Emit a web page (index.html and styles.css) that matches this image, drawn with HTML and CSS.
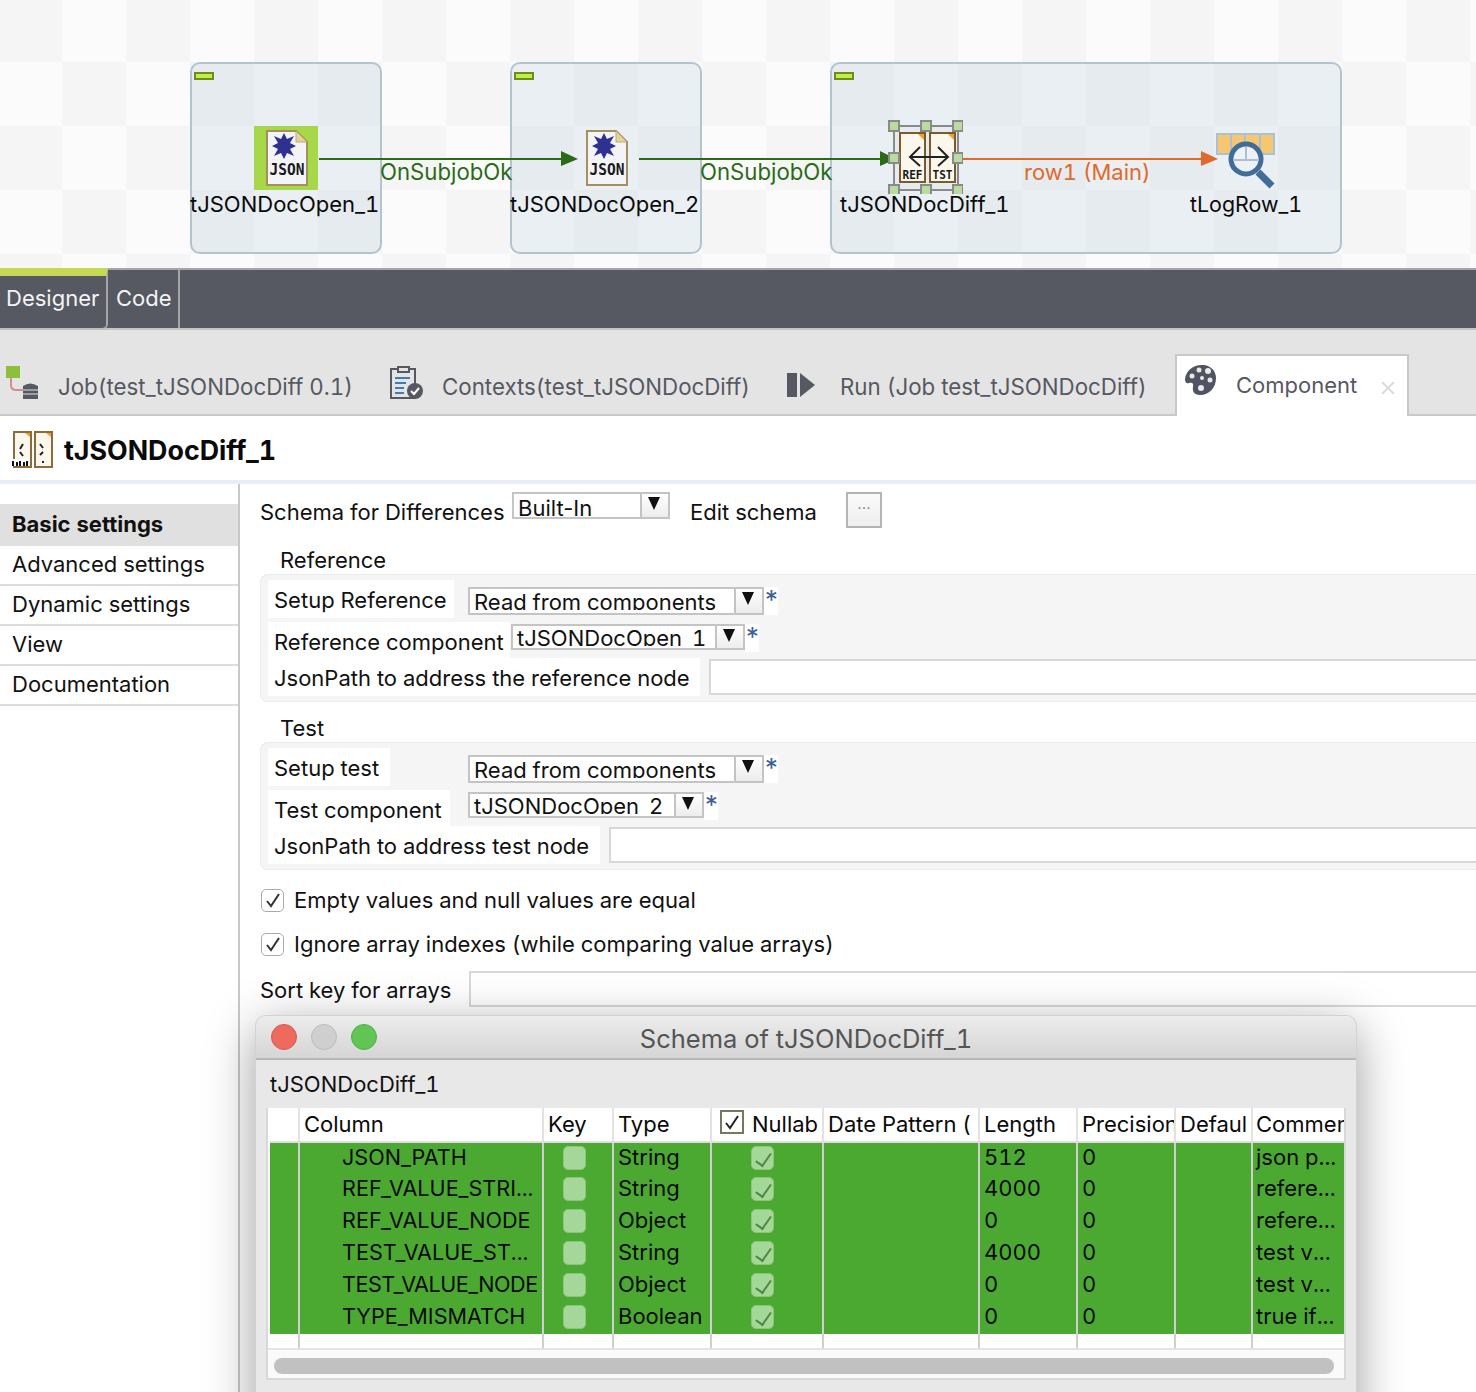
FILE: index.html
```html
<!DOCTYPE html>
<html lang="en">
<head>
    <meta charset="UTF-8">
    <title>Talend tJSONDocDiff</title>
    <link rel="stylesheet" href="styles.css">
</head>
<body>
    <svg class="defs" width="0" height="0">
        <symbol id="jsonDoc" viewBox="0 0 42 56">
            <path d="M1 1H30L41 12V55H1Z" fill="#f3f4f8" stroke="#a58f5c" stroke-width="2"/>
            <path d="M30 1L41 12H30Z" fill="#e3d3a0" stroke="#c2a868"/>
            <path d="M18 3L21 9L28 6L24 13L30 16L24 19L28 26L21 23L18 29L15 23L8 26L12 19L6 16L12 13L8 6L15 9Z" fill="#2e3192"/>
            <text x="21" y="45" class="json-word" text-anchor="middle" textLength="35" lengthAdjust="spacingAndGlyphs">JSON</text>
        </symbol>
    </svg>

    <div class="page">
        <section class="canvas">
            <div class="subjob subjob-a"><span class="collapse"></span></div>
            <div class="subjob subjob-b"><span class="collapse"></span></div>
            <div class="subjob subjob-c"><span class="collapse"></span></div>

            <svg class="links" width="1476" height="268">
                <path d="M319 159H563" stroke="#2b6a17" stroke-width="2"/>
                <path d="M561 151L578 159L561 166Z" fill="#2b6a17"/>
                <path d="M639 159H880" stroke="#2b6a17" stroke-width="2"/>
                <path d="M880 151L896 159L880 166Z" fill="#2b6a17"/>
                <path d="M962 159H1203" stroke="#e0692b" stroke-width="2"/>
                <path d="M1201 151L1218 159L1201 166Z" fill="#e0692b"/>
            </svg>

            <div class="node-hilite"></div>
            <svg class="node-icon icon-open1" width="42" height="56"><use href="#jsonDoc"/></svg>
            <svg class="node-icon icon-open2" width="42" height="56"><use href="#jsonDoc"/></svg>

            <svg class="node-icon icon-diff" width="84" height="84" viewBox="0 0 84 84">
                <rect x="15" y="16" width="64" height="64" fill="none" stroke="#8a8a8a" stroke-width="2"/>
                <rect x="21" y="23" width="25" height="49" fill="#fbf7ec" stroke="#7a5c2a" stroke-width="2"/>
                <rect x="51" y="23" width="25" height="49" fill="#fbf7ec" stroke="#7a5c2a" stroke-width="2"/>
                <path d="M39 24L45 24V30Z M69 24L75 24V30Z" fill="#f0a030"/>
                <path d="M41 37L31 47L41 56 M59 37L69 47L59 56 M31 47H69" fill="none" stroke="#222" stroke-width="2"/>
                <text x="33.5" y="69" class="pixel-word" text-anchor="middle" textLength="20" lengthAdjust="spacingAndGlyphs">REF</text>
                <text x="63.5" y="69" class="pixel-word" text-anchor="middle" textLength="20" lengthAdjust="spacingAndGlyphs">TST</text>
                <g fill="#b9dba0" stroke="#8a8a8a" stroke-width="2">
                    <rect x="10" y="11" width="10" height="10"/><rect x="42" y="11" width="10" height="10"/><rect x="74" y="11" width="10" height="10"/>
                    <rect x="10" y="43" width="10" height="10"/><rect x="74" y="43" width="10" height="10"/>
                    <rect x="10" y="75" width="10" height="10"/><rect x="42" y="75" width="10" height="10"/><rect x="74" y="75" width="10" height="10"/>
                </g>
            </svg>

            <svg class="node-icon icon-log" width="60" height="56" viewBox="0 0 60 56">
                <rect x="1" y="1" width="57" height="20" fill="#f6c770" stroke="#a9c0d6" stroke-width="2"/>
                <path d="M15 1V21 M29 1V21 M44 1V21" stroke="#a9c0d6" stroke-width="2"/>
                <circle cx="30" cy="26" r="15" fill="#eef2f6" stroke="#3f6c99" stroke-width="5"/>
                <path d="M30 14V27 M17 27H43" stroke="#a9c0d6" stroke-width="2"/>
                <path d="M42 39L56 53" stroke="#3f6c99" stroke-width="7"/>
            </svg>

            <span class="link-label ok-a">OnSubjobOk</span>
            <span class="link-label ok-b">OnSubjobOk</span>
            <span class="link-label row-main">row1 (Main)</span>

            <span class="node-label lbl-open1">tJSONDocOpen_1</span>
            <span class="node-label lbl-open2">tJSONDocOpen_2</span>
            <span class="node-label lbl-diff">tJSONDocDiff_1</span>
            <span class="node-label lbl-log">tLogRow_1</span>
        </section>

        <nav class="editor-tabs">
            <div class="editor-tab active">Designer</div>
            <div class="editor-tab">Code</div>
        </nav>

        <nav class="view-tabs">
            <div class="view-tab tab-job">
                <svg width="34" height="34" viewBox="0 0 34 34">
                    <rect x="1" y="0" width="14" height="12" fill="#8cc03c"/>
                    <path d="M6 12V19Q6 24 11 24H18" fill="none" stroke="#d98a8a" stroke-width="2"/>
                    <path d="M18 20Q25 15 33 20V33H18Z" fill="#565862"/>
                    <path d="M18 24H33 M18 28H33" stroke="#e4e4e4" stroke-width="1"/>
                </svg>
                <span>Job(test_tJSONDocDiff 0.1)</span>
            </div>
            <div class="view-tab tab-ctx">
                <svg width="34" height="34" viewBox="0 0 34 34">
                    <path d="M8 3H1V32H25V3H18" fill="none" stroke="#565862" stroke-width="2"/>
                    <rect x="8" y="1" width="11" height="5" fill="#e4e4e4" stroke="#565862" stroke-width="2"/>
                    <path d="M5 12H20 M5 17H16 M5 22H14 M5 27H14" stroke="#3f7cb4" stroke-width="2"/>
                    <circle cx="25" cy="25" r="8" fill="#565862"/>
                    <path d="M21 25L24 28L29 22" fill="none" stroke="#fff" stroke-width="2"/>
                </svg>
                <span>Contexts(test_tJSONDocDiff)</span>
            </div>
            <div class="view-tab tab-run">
                <svg width="30" height="26" viewBox="0 0 30 26">
                    <rect x="0" y="1" width="10" height="24" fill="#565862"/>
                    <path d="M13 1L28 13L13 25Z" fill="#565862"/>
                </svg>
                <span>Run (Job test_tJSONDocDiff)</span>
            </div>
            <div class="view-tab tab-comp">
                <svg width="34" height="32" viewBox="0 0 34 32">
                    <path d="M20 1C10 0 2 6 1 15C1 19 3 20 5 19C8 18 10 19 9 23C8 28 11 31 16 31C25 31 32 24 32 14C32 7 27 2 20 1Z" fill="#505460"/>
                    <g fill="#e9e9e9">
                        <circle cx="8" cy="12" r="2.5"/><circle cx="15" cy="6" r="2.5"/><circle cx="24" cy="7" r="3"/>
                        <circle cx="26" cy="16" r="2.5"/><circle cx="17" cy="24" r="3"/><circle cx="18" cy="14" r="2"/>
                    </g>
                </svg>
                <span>Component</span>
                <svg class="tab-close" width="16" height="16" viewBox="0 0 16 16"><path d="M2 2L14 14M14 2L2 14" stroke="#dcdcdc" stroke-width="2"/></svg>
            </div>
        </nav>

        <header class="comp-title">
            <svg width="42" height="38" viewBox="0 0 42 38">
                <rect x="3" y="1" width="17" height="35" fill="#fbf7ec" stroke="#8a6d3b" stroke-width="2"/>
                <rect x="24" y="1" width="17" height="35" fill="#fbf7ec" stroke="#8a6d3b" stroke-width="2"/>
                <path d="M14 2H19V6Z M35 2H40V6Z" fill="#f0a030"/>
                <path d="M12 13L9 18 M9 21L12 25 M29 13L32 17 M32 21L29 24" stroke="#222" stroke-width="2"/>
                <path d="M1 28H17V35H1Z" fill="#fff"/>
                <path d="M2 30V35 M6 31V35 M9 30V35 M13 31V35 M16 30V35" stroke="#111" stroke-width="2"/>
                <rect x="31" y="30" width="2" height="2" fill="#222"/>
            </svg>
            <h1>tJSONDocDiff_1</h1>
        </header>

        <div class="workspace">
            <aside class="sidebar">
                <div class="side-item active">Basic settings</div>
                <div class="side-item">Advanced settings</div>
                <div class="side-item">Dynamic settings</div>
                <div class="side-item">View</div>
                <div class="side-item">Documentation</div>
            </aside>

            <main class="settings">
                <div class="schema-row">
                    <span class="schema-label">Schema for Differences</span>
                    <div class="combo combo-schema"><span>Built-In</span><i></i></div>
                    <span class="edit-label">Edit schema</span>
                    <button class="dots-btn">...</button>
                </div>

                <div class="group-label">Reference</div>
                <div class="group-panel">
                    <div class="row row-setup">
                        <span class="cell w-setup-ref">Setup Reference</span>
                        <div class="combo combo-read"><span>Read from components</span><i></i></div>
                        <b class="req">*</b>
                    </div>
                    <div class="row row-comp">
                        <span class="cell w-ref-comp">Reference component</span>
                        <div class="combo combo-ref"><span>tJSONDocOpen_1</span><i></i></div>
                        <b class="req">*</b>
                    </div>
                    <div class="row row-path">
                        <span class="cell w-ref-path">JsonPath to address the reference node</span>
                        <div class="text-input"></div>
                    </div>
                </div>

                <div class="group-label">Test</div>
                <div class="group-panel">
                    <div class="row row-setup">
                        <span class="cell w-setup-test">Setup test</span>
                        <div class="combo combo-read"><span>Read from components</span><i></i></div>
                        <b class="req">*</b>
                    </div>
                    <div class="row row-comp">
                        <span class="cell w-test-comp">Test component</span>
                        <div class="combo combo-test"><span>tJSONDocOpen_2</span><i></i></div>
                        <b class="req">*</b>
                    </div>
                    <div class="row row-path">
                        <span class="cell w-test-path">JsonPath to address test node</span>
                        <div class="text-input"></div>
                    </div>
                </div>

                <label class="check-row first">
                    <span class="check-box"><svg width="16" height="16" viewBox="0 0 16 16"><path d="M2 9L6 14L14 2" fill="none" stroke="#333" stroke-width="2"/></svg></span>
                    Empty values and null values are equal
                </label>
                <label class="check-row">
                    <span class="check-box"><svg width="16" height="16" viewBox="0 0 16 16"><path d="M2 9L6 14L14 2" fill="none" stroke="#333" stroke-width="2"/></svg></span>
                    Ignore array indexes (while comparing value arrays)
                </label>
                <div class="sort-row">
                    <span class="sort-label">Sort key for arrays</span>
                    <div class="text-input"></div>
                </div>
            </main>
        </div>

        <div class="dialog">
            <div class="dialog-bar">
                <span class="light red"></span>
                <span class="light grey"></span>
                <span class="light green"></span>
                <span class="dialog-title">Schema of tJSONDocDiff_1</span>
            </div>
            <div class="dialog-name">tJSONDocDiff_1</div>
            <div class="table-wrap">
                <table class="schema-table">
                    <colgroup>
                        <col class="c-0"><col class="c-col"><col class="c-key"><col class="c-type"><col class="c-null">
                        <col class="c-date"><col class="c-len"><col class="c-prec"><col class="c-def"><col class="c-com">
                    </colgroup>
                    <thead>
                        <tr>
                            <th></th>
                            <th>Column</th>
                            <th>Key</th>
                            <th>Type</th>
                            <th class="null-head"><span class="head-check"><svg width="18" height="18" viewBox="0 0 18 18"><path d="M3 10L7 15L15 3" fill="none" stroke="#222" stroke-width="2"/></svg></span><span class="null-text">Nullab</span></th>
                            <th>Date Pattern (</th>
                            <th>Length</th>
                            <th>Precision</th>
                            <th>Defaul</th>
                            <th>Comment</th>
                        </tr>
                    </thead>
                    <tbody>
                        <tr>
                            <td></td><td class="name">JSON_PATH</td><td><span class="tick"></span></td><td>String</td>
                            <td><span class="tick on"></span></td><td></td><td>512</td><td>0</td><td></td><td>json p...</td>
                        </tr>
                        <tr>
                            <td></td><td class="name">REF_VALUE_STRI...</td><td><span class="tick"></span></td><td>String</td>
                            <td><span class="tick on"></span></td><td></td><td>4000</td><td>0</td><td></td><td>refere...</td>
                        </tr>
                        <tr>
                            <td></td><td class="name">REF_VALUE_NODE</td><td><span class="tick"></span></td><td>Object</td>
                            <td><span class="tick on"></span></td><td></td><td>0</td><td>0</td><td></td><td>refere...</td>
                        </tr>
                        <tr>
                            <td></td><td class="name">TEST_VALUE_ST...</td><td><span class="tick"></span></td><td>String</td>
                            <td><span class="tick on"></span></td><td></td><td>4000</td><td>0</td><td></td><td>test v...</td>
                        </tr>
                        <tr>
                            <td></td><td class="name tight">TEST_VALUE_NODE</td><td><span class="tick"></span></td><td>Object</td>
                            <td><span class="tick on"></span></td><td></td><td>0</td><td>0</td><td></td><td>test v...</td>
                        </tr>
                        <tr>
                            <td></td><td class="name">TYPE_MISMATCH</td><td><span class="tick"></span></td><td>Boolean</td>
                            <td><span class="tick on"></span></td><td></td><td>0</td><td>0</td><td></td><td>true if...</td>
                        </tr>
                        <tr class="blank">
                            <td></td><td></td><td></td><td></td><td></td><td></td><td></td><td></td><td></td><td></td>
                        </tr>
                    </tbody>
                </table>
                <div class="h-scroll"><div class="h-thumb"></div></div>
            </div>
        </div>
    </div>
</body>
</html>
```

FILE: styles.css
```css
* {
    margin: 0;
    padding: 0;
    box-sizing: border-box;
}

html,
body {
    height: 1392px;
    overflow: hidden;
    background-color: white;
}

body {
    font-family: Inter, 'Noto Sans', sans-serif;
    font-size: 22px;
    font-feature-settings: 'tnum';
    color: #111;
}

.defs {
    position: absolute;
}

.page {
    position: relative;
    width: 1476px;
    height: 1392px;
    overflow: hidden;
}

/* designer canvas */
.canvas {
    position: relative;
    height: 268px;
    background-color: #fbfbfb;
    background-image: conic-gradient(#f5f5f5 25%, transparent 25% 50%, #f5f5f5 50% 75%, transparent 75%);
    background-size: 128px 128px;
    background-position: 126px 62px;
}

.subjob {
    position: absolute;
    top: 62px;
    height: 192px;
    background-color: rgba(205, 218, 230, 0.36);
    border: 2px solid #b1c4d0;
    border-radius: 10px;
}

.subjob-a { left: 190px; width: 192px; }
.subjob-b { left: 510px; width: 192px; }
.subjob-c { left: 830px; width: 512px; }

.collapse {
    position: absolute;
    left: 2px;
    top: 8px;
    width: 20px;
    height: 8px;
    background-color: #bdf23c;
    border: 2px solid #6f8a24;
}

.links {
    position: absolute;
    left: 0;
    top: 0;
}

.node-hilite {
    position: absolute;
    left: 254px;
    top: 126px;
    width: 64px;
    height: 64px;
    background-color: #a6d84a;
}

.node-icon {
    position: absolute;
}

.icon-open1 { left: 266px; top: 130px; }
.icon-open2 { left: 586px; top: 130px; }
.icon-diff { left: 879px; top: 110px; }
.icon-log { left: 1216px; top: 133px; }

.json-word {
    font-family: 'DejaVu Sans Mono', monospace;
    font-weight: bold;
    font-size: 15px;
    fill: #1a1a1a;
}

.pixel-word {
    font-family: 'DejaVu Sans Mono', monospace;
    font-weight: bold;
    font-size: 12px;
    fill: #1a1a1a;
}

.link-label,
.node-label {
    position: absolute;
    line-height: 28px;
    white-space: nowrap;
}

.link-label {
    top: 158px;
    font-size: 22.2px;
}

.ok-a { left: 380px; color: #2b6a17; }
.ok-b { left: 700px; color: #2b6a17; }
.row-main { left: 1024px; font-size: 22px; color: #e0692b; }

.node-label {
    top: 190px;
    font-size: 22px;
    color: #0a0a0a;
}

.lbl-open1 { left: 190px; }
.lbl-open2 { left: 510px; }
.lbl-diff { left: 840px; }
.lbl-log { left: 1190px; font-size: 21.4px; }

/* designer / code tabs */
.editor-tabs {
    display: flex;
    height: 62px;
    background-color: #565862;
    border-top: 2px solid #a6a6a6;
    border-bottom: 2px solid #c4c4c4;
}

.editor-tab {
    display: flex;
    align-items: center;
    padding: 0 8px;
    color: #f4f4f4;
    border-right: 2px solid #a6a6a6;
}

.editor-tab.active {
    width: 108px;
    height: 62px;
    margin-top: -2px;
    margin-bottom: -2px;
    padding: 0 0 8px 6px;
    border-top: 8px solid #c6d854;
    border-bottom: 2px solid #bdbdbd;
    border-bottom-right-radius: 6px;
}

.editor-tab:last-child {
    width: 72px;
    padding-bottom: 3px;
}

/* view tabs */
.view-tabs {
    position: relative;
    height: 86px;
    background-color: #e4e4e4;
    border-bottom: 2px solid #c8c8c8;
    color: #565862;
    font-size: 22.3px;
}

.view-tab {
    position: absolute;
    display: flex;
    align-items: center;
    white-space: nowrap;
}

.view-tab span {
    padding-top: 6px;
}

.tab-job { left: 5px; top: 36px; gap: 19px; }
.tab-ctx { left: 390px; top: 36px; gap: 18px; }
.tab-run { left: 787px; top: 39px; gap: 23px; }

.tab-run span {
    padding-top: 4px;
}

.tab-comp {
    left: 1175px;
    top: 24px;
    width: 234px;
    height: 62px;
    padding: 0 0 2px 7px;
    gap: 18px;
    background-color: white;
    border: 2px solid #c8c8c8;
    border-bottom: none;
    font-size: 22px;
}

.tab-comp span {
    padding-top: 0;
}

.tab-comp > svg:first-child {
    margin-top: -10px;
}

.tab-close {
    margin-left: 5px;
    margin-top: 6px;
}

/* component title */
.comp-title {
    display: flex;
    align-items: center;
    gap: 11px;
    height: 68px;
    padding: 4px 0 0 11px;
    border-bottom: 4px solid #e6eef8;
}

.comp-title h1 {
    font-size: 26.8px;
    font-weight: 700;
    color: #0a0a0a;
}

.workspace {
    display: flex;
    height: 908px;
}

.sidebar {
    flex: 0 0 240px;
    padding-top: 20px;
    border-right: 2px solid #c8c8c8;
}

.side-item {
    height: 40px;
    line-height: 37px;
    padding-left: 12px;
    border-bottom: 2px solid #dcdcdc;
    color: #111;
}

.side-item.active {
    height: 42px;
    line-height: 40px;
    font-weight: 700;
    background-color: #e0e0e0;
    border-bottom: none;
}

/* settings form */
.settings {
    flex: 1;
    min-width: 0;
    padding: 8px 0 0 20px;
}

.schema-row {
    display: flex;
    align-items: flex-start;
    height: 36px;
}

.schema-label {
    flex: none;
    width: 252px;
    margin-top: 7px;
    white-space: nowrap;
}

.edit-label {
    flex: none;
    width: 156px;
    margin: 7px 0 0 20px;
    white-space: nowrap;
}

.dots-btn {
    width: 36px;
    height: 36px;
    border: 2px solid #b4b4b4;
    background: linear-gradient(#fafafa, #efefef);
    color: #888;
    font-size: 16px;
    line-height: 18px;
    padding-bottom: 12px;
}

.combo {
    display: flex;
    flex: none;
    justify-content: space-between;
    border: 2px solid #c4c4c4;
    background-color: white;
    overflow: hidden;
    line-height: 30px;
    height: 27px;
}

.combo span {
    padding-left: 4px;
    white-space: nowrap;
    overflow: hidden;
}

.combo i {
    position: relative;
    flex: none;
    width: 28px;
    height: 24px;
    background: linear-gradient(#ffffff, #ececec);
    border-left: 2px solid #c4c4c4;
}

.combo i::after {
    content: '';
    position: absolute;
    left: 6px;
    top: 3px;
    border-left: 6px solid transparent;
    border-right: 6px solid transparent;
    border-top: 13px solid #111;
}

.combo-schema {
    width: 158px;
    line-height: 28px;
    font-feature-settings: normal;
}

.combo-read {
    width: 296px;
    height: 28px;
    margin: 7px 0 0 14px;
    line-height: 26px;
}

/* the combo text is cut off at its foot, descenders and underscore go */
.combo-read span {
    height: 21px;
}

.combo-ref {
    width: 234px;
    height: 26px;
    margin: 2px 0 0 1px;
    line-height: 25px;
}

.combo-test {
    width: 236px;
    height: 26px;
    margin: 2px 0 0 18px;
    line-height: 25px;
}

.combo-ref span,
.combo-test span {
    height: 20px;
}

.group-label {
    height: 28px;
    line-height: 28px;
    margin-top: 18px;
    padding-left: 20px;
}

.group-label + .group-panel + .group-label {
    margin-top: 12px;
}

.group-panel {
    height: 128px;
    padding: 6px 0 0 8px;
    background-color: #f5f5f5;
    border-radius: 8px 0 0 8px;
    box-shadow: inset 1px 1px 0 #ececec, inset 0 -1px 0 #ececec;
}

.row {
    display: flex;
    align-items: flex-start;
}

.row-setup {
    height: 42px;
}

.row-comp {
    height: 36px;
}

.row-path {
    height: 38px;
}

.cell {
    flex: none;
    background-color: white;
    padding-left: 6px;
    white-space: nowrap;
}

.row-setup .cell {
    height: 38px;
    line-height: 40px;
}

.row-comp .cell {
    height: 36px;
    line-height: 40px;
}

.row-path .cell {
    height: 38px;
    line-height: 40px;
}

.w-setup-ref { width: 186px; }
.w-setup-test { width: 122px; margin-right: 64px; }
.w-ref-comp { width: 242px; }
.w-test-comp { width: 182px; }
.w-ref-path { width: 432px; }
.w-test-path { width: 332px; }

.req {
    flex: none;
    width: 14px;
    height: 28px;
    background-color: white;
    color: #3d5f94;
    font-size: 26px;
    font-weight: 400;
    line-height: 26px;
    text-indent: -1px;
}

.row-setup .req {
    margin-top: 7px;
}

.row-comp .req {
    margin-top: 2px;
}

.text-input {
    flex: 1;
    height: 36px;
    margin-left: 9px;
    background-color: white;
    border: 2px solid #d8d8d8;
    border-right: none;
}

.row-path .text-input {
    margin-top: 1px;
}

.check-row {
    display: flex;
    align-items: center;
    gap: 10px;
    height: 44px;
}

.check-row.first {
    margin-top: 8px;
}

.check-box {
    display: flex;
    align-items: center;
    justify-content: center;
    width: 23px;
    height: 23px;
    margin-left: 1px;
    background-color: white;
    border: 1px solid #aaa;
    border-radius: 5px;
}

.sort-row {
    display: flex;
    align-items: center;
    height: 36px;
    margin-top: 5px;
}

.sort-label {
    flex: none;
    width: 200px;
    padding-top: 2px;
    white-space: nowrap;
}

.sort-row .text-input {
    margin-left: 9px;
}

/* schema dialog */
.dialog {
    position: absolute;
    left: 256px;
    top: 1016px;
    width: 1100px;
    height: 420px;
    background-color: #e8e8e8;
    border-radius: 10px 10px 0 0;
    box-shadow: 0 0 0 1px #d2d2d2, 0 12px 50px rgba(0, 0, 0, 0.4);
}

.dialog-bar {
    position: relative;
    display: flex;
    align-items: center;
    gap: 14px;
    height: 44px;
    padding-left: 15px;
    background: linear-gradient(#ececec, #d5d5d5);
    border-bottom: 2px solid #b8b8b8;
    border-radius: 10px 10px 0 0;
}

.light {
    width: 26px;
    height: 26px;
    border-radius: 50%;
}

.light.red { background-color: #ee6a5f; border: 1px solid #d9574c; }
.light.grey { background-color: #cfcfcf; border: 1px solid #bcbcbc; }
.light.green { background-color: #61c554; border: 1px solid #52ae46; }

.dialog-title {
    position: absolute;
    left: 0;
    right: 0;
    top: 5px;
    text-align: center;
    font-size: 25.5px;
    line-height: 36px;
    color: #555;
}

.dialog-name {
    height: 48px;
    line-height: 48px;
    padding-left: 14px;
}

.table-wrap {
    width: 1080px;
    margin-left: 10px;
    background-color: white;
    border: 2px solid #d8d8d8;
    border-top: none;
}

.schema-table {
    table-layout: fixed;
    width: 1074px;
    margin-left: 2px;
    border-collapse: collapse;
}

.c-0 { width: 29px; }
.c-col { width: 244px; }
.c-key { width: 70px; }
.c-type { width: 98px; }
.c-null { width: 112px; }
.c-date { width: 156px; }
.c-len { width: 98px; }
.c-prec { width: 98px; }
.c-def { width: 77px; }
.c-com { width: 92px; }

.schema-table th,
.schema-table td {
    padding-left: 4px;
    overflow: hidden;
    white-space: nowrap;
    text-align: left;
    font-weight: 400;
    border-left: 2px solid #cfcfcf;
}

.schema-table th:first-child,
.schema-table td:first-child {
    border-left: none;
}

.schema-table th:last-child,
.schema-table td:last-child {
    padding-left: 3px;
}

.schema-table th {
    height: 34px;
    padding-bottom: 2px;
    color: #0a0a0a;
    border-bottom: 2px solid #dedede;
    border-left-color: #e2e2e2;
}

.schema-table td {
    height: 32px;
    line-height: 28px;
    vertical-align: top;
    background-color: #4ba931;
    color: #0a0a0a;
}

.schema-table td.name {
    padding-left: 42px;
    font-size: 21.6px;
}

.schema-table td.tight {
    letter-spacing: -0.5px;
}

.schema-table .blank td {
    height: 14px;
    background-color: white;
}

.null-head {
    position: relative;
}

.head-check {
    position: absolute;
    left: 8px;
    top: 2px;
    display: flex;
    align-items: center;
    justify-content: center;
    width: 24px;
    height: 24px;
    border: 2px solid #77775f;
    background-color: white;
}

.null-text {
    padding-left: 36px;
}

.tick {
    display: block;
    position: relative;
    width: 23px;
    height: 24px;
    margin: 3px 0 0 15px;
    background-color: #a5d799;
    border: 1px solid #8cc47e;
    border-radius: 5px;
}

.schema-table td:nth-child(5) .tick {
    margin-left: 35px;
}

.tick.on::after {
    content: '';
    position: absolute;
    left: 7px;
    top: 3px;
    width: 7px;
    height: 14px;
    border-right: 2px solid #4f8a45;
    border-bottom: 2px solid #4f8a45;
    transform: rotate(35deg);
}

.h-scroll {
    height: 30px;
    padding: 8px 6px 0;
    background-color: #fafafa;
    border-top: 2px solid #e4e4e4;
}

.h-thumb {
    width: 1060px;
    height: 16px;
    background-color: #c1c1c1;
    border-radius: 8px;
}
```
